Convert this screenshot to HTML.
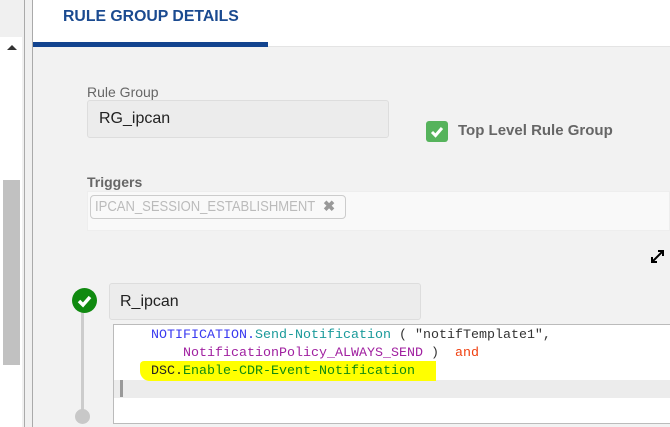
<!DOCTYPE html>
<html><head><style>
*{margin:0;padding:0;box-sizing:border-box}
body{width:670px;height:427px;overflow:hidden;background:#f2f2f2;font-family:"Liberation Sans",sans-serif;position:relative}
.a{position:absolute}
.mono{font-family:"Liberation Mono",monospace;font-size:13.33px;white-space:pre;line-height:18px}
</style></head><body>
<div class="a" style="left:0;top:0;width:22px;height:37px;background:#f0f0f0"></div>
<div class="a" style="left:0;top:37px;width:22px;height:390px;background:#fff"></div>
<div class="a" style="left:22px;top:0;width:11px;height:427px;background:#f0f0f0"></div>
<div class="a" style="left:24px;top:0;width:1px;height:427px;background:#aaa"></div>
<div class="a" style="left:32px;top:0;width:1px;height:427px;background:#aaa"></div>
<div class="a" style="left:7px;top:45px;width:0;height:0;border-left:5px solid transparent;border-right:5px solid transparent;border-bottom:5px solid #333"></div>
<div class="a" style="left:3px;top:180px;width:17px;height:185px;background:#c1c1c1"></div>
<div class="a" style="left:33px;top:0;width:637px;height:47px;background:#fff;border-bottom:1px solid #e4e4e4"></div>
<div class="a" style="left:63px;top:8px;font-size:15.8px;font-weight:bold;color:#1a4a90">RULE GROUP DETAILS</div>
<div class="a" style="left:33px;top:42px;width:235px;height:5px;background:#12448f"></div>

<div class="a" style="left:87px;top:84px;font-size:14px;color:#666">Rule Group</div>
<div class="a" style="left:87px;top:100px;width:302px;height:38px;background:#ececec;border:1px solid #ddd;border-radius:3px;font-size:16px;color:#222;padding:9px 11px">RG_ipcan</div>

<div class="a" style="left:426px;top:121px;width:22px;height:21px;background:#56b35c;border-radius:3px"></div>
<svg class="a" style="left:426px;top:121px" width="22" height="21"><path d="M6 11 L9.5 14.5 L16 7" stroke="#fff" stroke-width="3" fill="none"/></svg>
<div class="a" style="left:458px;top:122px;font-size:15px;font-weight:bold;color:#666">Top Level Rule Group</div>

<div class="a" style="left:87px;top:174px;font-size:14px;font-weight:bold;color:#666">Triggers</div>
<div class="a" style="left:87px;top:191px;width:583px;height:40px;background:#f9f9f9;border:1px solid #eee"></div>
<div class="a" style="left:90px;top:195px;width:256px;height:24px;border:1px solid #ccc;border-radius:4px;font-size:14.5px;color:#bbb;padding:3px 4px;white-space:nowrap;overflow:hidden"><span style="display:inline-block;transform:scaleX(0.9);transform-origin:left">IPCAN_SESSION_ESTABLISHMENT</span><b class="a" style="left:232px;top:3px;color:#999">✖</b></div>

<svg class="a" style="left:650px;top:249px" width="15" height="15"><path d="M2 13 L13 2 M8 2 H13 V7 M2 8 V13 H7" stroke="#000" stroke-width="2" fill="none"/></svg>

<div class="a" style="left:81px;top:312px;width:3px;height:104px;background:#ccc"></div>
<div class="a" style="left:75px;top:409px;width:15px;height:15px;border-radius:50%;background:#c8c8c8"></div>
<div class="a" style="left:72px;top:288px;width:25px;height:25px;border-radius:50%;background:#108a10"></div>
<svg class="a" style="left:72px;top:288px" width="25" height="25"><path d="M7 13 L11 17 L18 9" stroke="#fff" stroke-width="3.5" fill="none"/></svg>

<div class="a" style="left:109px;top:283px;width:312px;height:37px;background:#ececec;border:1px solid #ddd;border-radius:3px;font-size:16px;color:#222;padding:9px 10px">R_ipcan</div>

<div class="a" style="left:113px;top:324px;width:560px;height:100px;background:#fff;border:1px solid #bbb"></div>
<div class="a" style="left:114px;top:380px;width:556px;height:18px;background:#ececec"></div>
<div class="a" style="left:120px;top:380px;width:3px;height:17px;background:#999"></div>
<div class="a" style="left:140px;top:361px;width:296px;height:20px;background:#ffff00;border-radius:4px 0 0 10px"></div>
<div class="a mono" style="left:151px;top:327px"><span style="color:#3a3af0">NOTIFICATION.</span><span style="color:#1a9a9a">Send-Notification</span><span style="color:#333"> ( "notifTemplate1",</span></div>
<div class="a mono" style="left:151px;top:345px"><span style="color:#a020a0">    NotificationPolicy_ALWAYS_SEND</span><span style="color:#333"> )  </span><span style="color:#f04010">and</span></div>
<div class="a mono" style="left:151px;top:363px"><span style="color:#222">DSC.</span><span style="color:#108a10">Enable-CDR-Event-Notification</span></div>
</body></html>
